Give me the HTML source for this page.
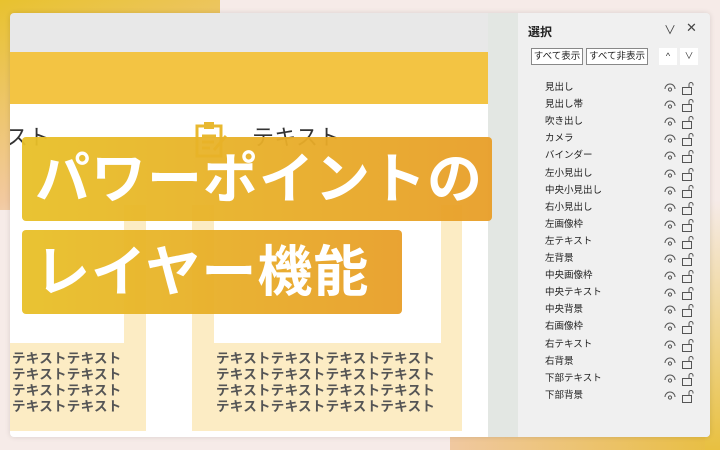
<!DOCTYPE html>
<html><head><meta charset="utf-8"><style>
*{margin:0;padding:0;box-sizing:border-box}
body{width:720px;height:450px;overflow:hidden;position:relative;background:#f6ebe8;font-family:"Liberation Sans","Noto Sans CJK JP",sans-serif}
.bgtl{position:absolute;left:0;top:0;width:220px;height:210px;background:linear-gradient(160deg,#e8c22e,#f2c9a0 70%,#f6ebe8);}
.bgbr{position:absolute;left:450px;top:425px;width:270px;height:25px;background:linear-gradient(90deg,#f0c8a0,#e8be40)}
.bgr{position:absolute;left:705px;top:200px;width:15px;height:250px;background:linear-gradient(180deg,#f6ebe8,#e8c040)}
.win{position:absolute;left:10px;top:13px;width:700px;height:424px;background:#e8e8e8;border-radius:4px;overflow:hidden;box-shadow:0 0 6px rgba(0,0,0,.12)}
.side{position:absolute;left:478px;top:0;width:30px;height:424px;background:#e3e7e3}
.slide{position:absolute;left:0;top:39px;width:478px;height:385px;background:#fff;overflow:hidden}
.band{position:absolute;left:0;top:0;width:478px;height:52px;background:#f3c443}
.cream{position:absolute;background:#fcecc4}
.wh{position:absolute;background:#fff}
.tx{position:absolute;font-size:13.5px;font-weight:bold;color:#555;line-height:16px;letter-spacing:.3px}
.lbl{position:absolute;left:12px;height:84px;border-radius:4px;background:linear-gradient(90deg,rgba(232,192,40,.95),rgba(232,158,40,.95));color:#fff;font-weight:bold;font-size:55px;line-height:84px;padding-left:13px;white-space:nowrap;letter-spacing:1px}
.panel{position:absolute;left:508px;top:0;width:192px;height:424px;background:#f0f0f0}
.h{position:absolute;left:10px;top:10px;font-size:12px;font-weight:bold;color:#222}
.btn{position:absolute;top:35px;height:17px;border:1px solid #888;background:#fff;font-size:9.5px;line-height:15px;text-align:center;color:#222}
.sq{position:absolute;top:35px;width:18px;height:17px;background:#fff;font-size:9px;text-align:center;line-height:17px;color:#333}
.row{position:absolute;left:27px;font-size:9.5px;color:#222;height:17px;line-height:17px}
</style></head><body>
<div class="bgtl"></div><div class="bgbr"></div><div class="bgr"></div>
<div class="win">
<div class="side"></div>
<div class="slide">
<div class="band"></div>
<div class="tx" style="left:-4px;top:78px;font-size:22px;font-weight:normal;color:#333">スト</div>
<svg style="position:absolute;left:184px;top:68px" width="36" height="40" viewBox="0 0 36 40"><rect x="3" y="6" width="24" height="30" fill="none" stroke="#e8b830" stroke-width="3"/><rect x="10" y="2" width="10" height="7" fill="#e8b830"/><path d="M8 16h14M8 22h12M8 28h8M20 30l12-14" stroke="#e8b830" stroke-width="3"/></svg>
<div class="tx" style="left:242px;top:78px;font-size:22px;font-weight:normal;color:#333">テキスト</div>
<div class="cream" style="left:0;top:153px;width:136px;height:226px"></div>
<div class="wh" style="left:0;top:153px;width:114px;height:138px"></div>
<div class="cream" style="left:182px;top:153px;width:270px;height:226px"></div>
<div class="wh" style="left:204px;top:153px;width:227px;height:138px"></div>
<div class="tx" style="left:2px;top:299px">テキストテキスト<br>テキストテキスト<br>テキストテキスト<br>テキストテキスト</div>
<div class="tx" style="left:206px;top:299px">テキストテキストテキストテキスト<br>テキストテキストテキストテキスト<br>テキストテキストテキストテキスト<br>テキストテキストテキストテキスト</div>
</div>
<div class="lbl" style="top:124px;width:470px">パワーポイントの</div>
<div class="lbl" style="top:217px;width:380px">レイヤー機能</div>
<div class="panel">
<div class="h">選択</div>
<div style="position:absolute;left:146px;top:8px;font-size:12px;color:#444">&#8744;</div>
<div style="position:absolute;left:168px;top:7px;font-size:13px;color:#444">✕</div>
<div class="btn" style="left:13px;width:52px">すべて表示</div>
<div class="btn" style="left:68px;width:62px">すべて非表示</div>
<div class="sq" style="left:141px">^</div>
<div class="sq" style="left:162px">&#8744;</div>
<div id="rows"></div>
</div>
</div>
<script>
var n=["見出し","見出し帯","吹き出し","カメラ","バインダー","左小見出し","中央小見出し","右小見出し","左画像枠","左テキスト","左背景","中央画像枠","中央テキスト","中央背景","右画像枠","右テキスト","右背景","下部テキスト","下部背景"];
var h="";n.forEach(function(t,i){var y=66+i*17.1;h+='<div class="row" style="top:'+y+'px">'+t+'</div><svg style="position:absolute;left:144px;top:'+(y+2)+'px" width="34" height="14" viewBox="0 0 34 14"><path d="M3 8a5 5 0 0 1 10 0" fill="none" stroke="#555" stroke-width="1"/><circle cx="8" cy="8.5" r="1.6" fill="none" stroke="#555"/><rect x="20.5" y="6.5" width="9" height="7" fill="none" stroke="#555"/><path d="M27 6.5v-3a2 2 0 0 1 4 0v1" fill="none" stroke="#555"/></svg>';});
document.getElementById("rows").innerHTML=h;
</script>
</body></html>
